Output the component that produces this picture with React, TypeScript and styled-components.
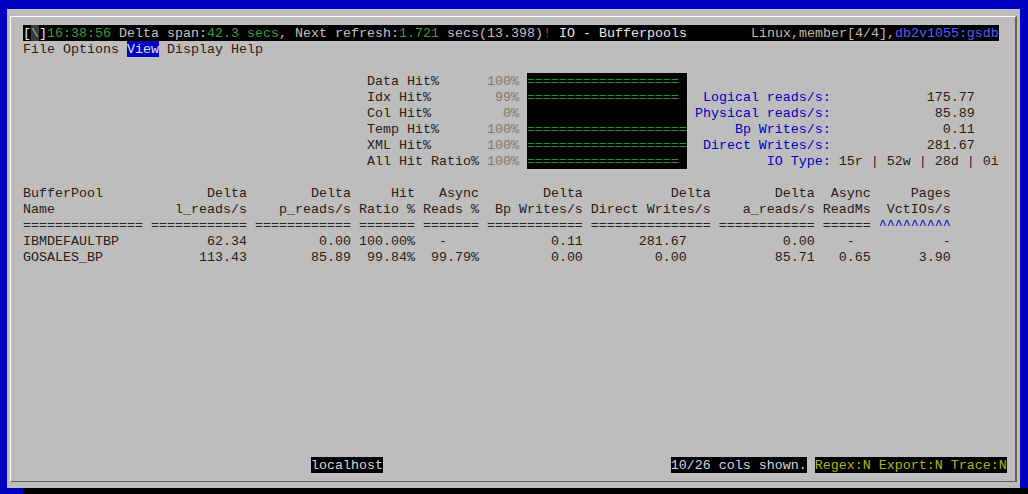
import React from "react";
import styled, { createGlobalStyle } from "styled-components";

const GlobalStyle = createGlobalStyle`
  html, body {
    margin: 0;
    padding: 0;
    background: #0000c0;
  }
  body {
    width: 1028px;
    height: 494px;
    overflow: hidden;
  }
`;

// terminal palette
const K = "#000000";
const FG = "#2a2016";
const WHITE = "#e8e8e8";
const LIGHT = "#c0c0c0";
const GREEN = "#3c9c3c";
const RED = "#e82020";
const TAN = "#c4bca4";
const HOSTBLUE = "#5c5cff";
const LABELBLUE = "#0000c8";
const PCT = "#857565";
const BAR = "#1e9a1e";
const YELLOW = "#b4b400";

const Desktop = styled.div`
  width: 1028px;
  height: 494px;
  display: flex;
  flex-direction: column;
`;

const WindowRow = styled.div`
  display: flex;
  padding: 9px 0 0 7px;
`;

const Window = styled.div`
  width: 1013px;
  height: 479px;
  box-sizing: border-box;
  background: #bdbdbd;
  padding: 7px 3px 6px 3px;
`;

const Frame = styled.div`
  height: 466px;
  box-sizing: border-box;
  border-top: 1px solid #ffffff;
  border-left: 1px solid #ffffff;
  border-right: 2px solid #6e604e;
  border-bottom: 1px solid #5e5e5e;
  padding: 8px 0 0 12px;
`;

const Taskbar = styled.div`
  margin-left: 23px;
  height: 6px;
  background: #000;
`;

const Screen = styled.div`
  height: 448px;
  display: flex;
  flex-direction: column;
  font-family: "Liberation Mono", "Courier New", monospace;
  font-size: 13.333px;
  line-height: 16px;
  color: ${FG};
  white-space: pre;
`;

const Line = styled.div<{ $gap?: boolean; $bottom?: boolean }>`
  height: 16px;
  display: flex;
  margin-bottom: ${(p) => (p.$gap ? "16px" : "0")};
  margin-top: ${(p) => (p.$bottom ? "auto" : "0")};
`;

const Seg = styled.span<{ $fg?: string; $bg?: string }>`
  display: inline-block;
  height: 16px;
  line-height: 18px;
  color: ${(p) => p.$fg || "inherit"};
  background: ${(p) => p.$bg || "transparent"};
`;

type Part = [string, string?, string?];

const sp = (n: number): Part => [" ".repeat(n)];

const title: Part[] = [
  ["[", WHITE, K],
  ["\\", "#b0b0b0", "#3a3a3a"],
  ["]", WHITE, K],
  ["16:38:56", GREEN, K],
  [" Delta span:", LIGHT, K],
  ["42.3 secs", GREEN, K],
  [", Next refresh:", LIGHT, K],
  ["1.721", GREEN, K],
  [" secs(13.398)", LIGHT, K],
  ["!", RED, K],
  [" IO - Bufferpools", WHITE, K],
  ["        ", LIGHT, K],
  ["Linux,member[4/4],", TAN, K],
  ["db2v1055:gsdb", HOSTBLUE, K],
];

const menu: Part[] = [
  ["File Options "],
  ["View", "#e4e4ff", "#0000c0"],
  [" Display Help"],
];

const hitRow = (label: string, pct: string, bar: number, rLabel?: string, rVal?: string): Part[] => {
  const parts: Part[] = [
    sp(43),
    [label.padEnd(15)],
    [pct.padStart(4), PCT],
    sp(1),
    ["=".repeat(bar).padEnd(20), BAR, K],
  ];
  if (rLabel && rVal) {
    parts.push([rLabel.padStart(18), LABELBLUE]);
    parts.push([rVal.padStart(18)]);
  }
  return parts;
};

const hits: Part[][] = [
  hitRow("Data Hit%", "100%", 19),
  hitRow("Idx Hit%", "99%", 19, "Logical reads/s:", "175.77"),
  hitRow("Col Hit%", "0%", 0, "Physical reads/s:", "85.89"),
  hitRow("Temp Hit%", "100%", 20, "Bp Writes/s:", "0.11"),
  hitRow("XML Hit%", "100%", 20, "Direct Writes/s:", "281.67"),
  hitRow("All Hit Ratio%", "100%", 19, "IO Type:", " 15r | 52w | 28d | 0i"),
];

const widths = [15, 12, 12, 7, 7, 12, 15, 12, 6, 9];

const tableRow = (cells: string[]) =>
  cells.map((c, i) => (i === 0 ? c.padEnd(widths[i]) : c.padStart(widths[i]))).join(" ");

const tableLines: Part[][] = [
  [[tableRow(["BufferPool", "Delta", "Delta", "Hit", "Async", "Delta", "Delta", "Delta", "Async", "Pages"])]],
  [[tableRow(["Name", "l_reads/s", "p_reads/s", "Ratio %", "Reads %", "Bp Writes/s", "Direct Writes/s", "a_reads/s", "ReadMs", "VctIOs/s"])]],
  [
    [widths.slice(0, -1).map((w) => "=".repeat(w)).join(" ") + " "],
    ["^".repeat(9), LABELBLUE],
  ],
  [[tableRow(["IBMDEFAULTBP", "62.34", "0.00", "100.00%", "-    ", "0.11", "281.67   ", "0.00", "-  ", "-"])]],
  [[tableRow(["GOSALES_BP", "113.43", "85.89", "99.84%", "99.79%", "0.00", "0.00   ", "85.71", "0.65", "3.90"])]],
];

const status: Part[] = [
  sp(36),
  ["localhost", "#d8d8d8", K],
  sp(36),
  ["10/26 cols shown.", "#d0d8e8", K],
  sp(1),
  ["Regex:N Export:N Trace:N", YELLOW, K],
];

const Parts = ({ parts }: { parts: Part[] }) => (
  <>
    {parts.map(([text, fg, bg], i) => (
      <Seg key={i} $fg={fg} $bg={bg}>
        {text}
      </Seg>
    ))}
  </>
);

export default function App() {
  return (
    <>
      <GlobalStyle />
      <Desktop>
        <WindowRow>
          <Window>
            <Frame>
              <Screen>
                <Line>
                  <Parts parts={title} />
                </Line>
                <Line $gap>
                  <Parts parts={menu} />
                </Line>
                {hits.map((row, i) => (
                  <Line key={i} $gap={i === hits.length - 1}>
                    <Parts parts={row} />
                  </Line>
                ))}
                {tableLines.map((row, i) => (
                  <Line key={i}>
                    <Parts parts={row} />
                  </Line>
                ))}
                <Line $bottom>
                  <Parts parts={status} />
                </Line>
              </Screen>
            </Frame>
          </Window>
        </WindowRow>
        <Taskbar />
      </Desktop>
    </>
  );
}
